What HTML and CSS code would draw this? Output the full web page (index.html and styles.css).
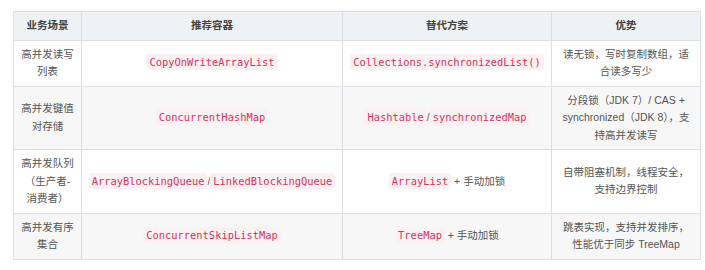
FILE: index.html
```html
<!DOCTYPE html>
<html lang="zh-CN">
  <head>
    <meta charset="UTF-8" />
    <meta name="viewport" content="width=device-width, initial-scale=1" />
    <title>并发容器对比</title>
    <link rel="stylesheet" href="styles.css">
  </head>
  <body>
    <table class="compare">
      <colgroup>
        <col class="col-scene" />
        <col class="col-rec" />
        <col class="col-alt" />
        <col class="col-adv" />
      </colgroup>
      <thead>
        <tr>
          <th>业务场景</th>
          <th>推荐容器</th>
          <th>替代方案</th>
          <th>优势</th>
        </tr>
      </thead>
      <tbody>
        <tr>
          <td>高并发读写列表</td>
          <td><code>CopyOnWriteArrayList</code></td>
          <td><code>Collections.synchronizedList()</code></td>
          <td>读无锁，写时复制数组，适合读多写少</td>
        </tr>
        <tr>
          <td>高并发键值对存储</td>
          <td><code>ConcurrentHashMap</code></td>
          <td><code>Hashtable</code>/<code>synchronizedMap</code></td>
          <td>分段锁（JDK 7）/ CAS + synchronized（JDK 8），支持高并发读写</td>
        </tr>
        <tr>
          <td>高并发队列（生产者-消费者）</td>
          <td><code>ArrayBlockingQueue</code>/<code>LinkedBlockingQueue</code></td>
          <td><code>ArrayList</code> + 手动加锁</td>
          <td>自带阻塞机制，线程安全，支持边界控制</td>
        </tr>
        <tr>
          <td>高并发有序集合</td>
          <td><code>ConcurrentSkipListMap</code></td>
          <td><code>TreeMap</code> + 手动加锁</td>
          <td>跳表实现，支持并发排序，性能优于同步 TreeMap</td>
        </tr>
      </tbody>
    </table>
  </body>
</html>
```

FILE: styles.css
```css
body {
  margin: 0;
  padding: 11px 13px;
  background: #fff;
  font-family: 'Liberation Sans', 'Noto Sans CJK SC', sans-serif;
  font-size: 10.5px;
  color: #555;
}

.compare {
  border-collapse: collapse;
  table-layout: fixed;
  width: 687px;
}

.col-scene { width: 68px; }
.col-rec { width: 261px; }
.col-alt { width: 209px; }
.col-adv { width: 149px; }

.compare th,
.compare td {
  border: 1px solid #dcdfe3;
  padding: 5px 6px;
  line-height: 17.5px;
  text-align: center;
  vertical-align: middle;
}

.compare th {
  background: #eff2f5;
  font-weight: 700;
  color: #444;
}

.compare tbody tr:nth-child(even) td {
  background: #f7f7f7;
}

code {
  font-family: 'DejaVu Sans Mono', monospace;
  font-size: 10.4px;
  color: #d6335b;
  background: #fbf1f3;
  padding: 2px 3px;
  border-radius: 2px;
}
```
